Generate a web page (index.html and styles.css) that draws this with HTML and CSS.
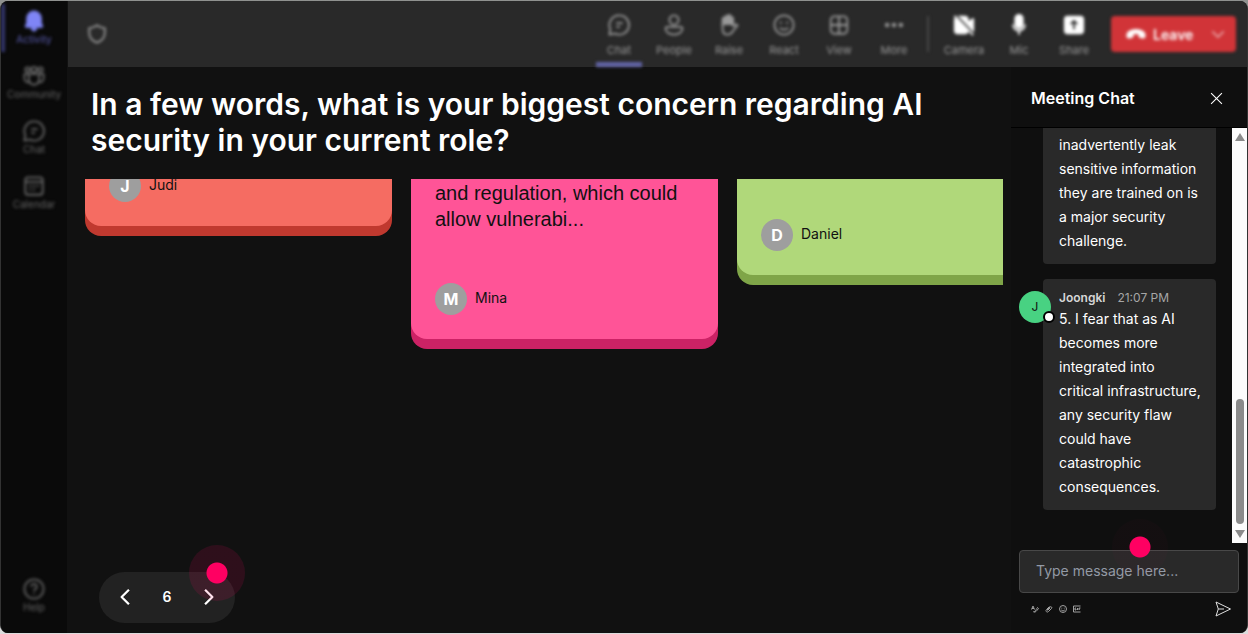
FILE: index.html
```
<!DOCTYPE html>
<html lang="en">
<head>
  <meta charset="utf-8">
  <title>Meeting</title>
  <link rel="stylesheet" href="styles.css">
</head>
<body>
  <!-- shared icons -->
  <svg class="sprite" aria-hidden="true">
    <symbol id="i-chat" viewBox="0 0 24 24">
      <path d="M12.500 1.500a10.500 10.500 0 1 1-4.800 19.900L1.500 22.500l1-6A10.500 10.500 0 0 1 12.500 1.500z"/>
      <path d="M9 10h7M9 14h4"/>
    </symbol>
  </svg>

  <div class="window">
    <nav class="rail">
      <a class="rail-item active" href="#">
        <svg viewBox="0 0 24 24"><path class="solid" d="M12 1a8 8 0 0 0-8 8v5l-1.500 3.500c-.3.800.2 1.500 1 1.500h17c.8 0 1.300-.7 1-1.500L20 14V9a8 8 0 0 0-8-8zM9 20h6a3 3 0 0 1-6 0z"/></svg>
        <span>Activity</span>
      </a>
      <a class="rail-item" href="#">
        <svg viewBox="0 0 24 24"><circle cx="5" cy="5" r="2.500"/><circle cx="12" cy="5" r="3"/><circle cx="19" cy="5" r="2.500"/><path d="M6.500 10h11v6a5.500 5.500 0 0 1-11 0zM6.500 10H1.500v4.500a4.500 4.500 0 0 0 5.500 4.400M17.500 10h5v4.500a4.500 4.500 0 0 1-5.500 4.400"/></svg>
        <span>Community</span>
      </a>
      <a class="rail-item" href="#">
        <svg><use href="#i-chat"/></svg>
        <span>Chat</span>
      </a>
      <a class="rail-item" href="#">
        <svg viewBox="0 0 24 24"><rect x="2.500" y="2.500" width="19" height="19" rx="3"/><path d="M2.500 7.500h19M7 12h2M11 12h2M15 12h2M7 16h2M11 16h2"/></svg>
        <span>Calendar</span>
      </a>
      <a class="rail-item help" href="#">
        <svg viewBox="0 0 24 24"><circle cx="12" cy="12" r="10.500"/><path d="M9 9.500a3 3 0 1 1 4.500 2.600c-1 .6-1.500 1-1.500 2.400M12 16.500v1.500"/></svg>
        <span>Help</span>
      </a>
    </nav>

    <div class="meeting">
      <header class="toolbar">
        <svg class="shield" viewBox="0 0 24 24"><path d="M12 2.500c2.500 2 5 3 8.500 3V11c0 5-3 8.500-8.500 10.500C6.500 19.500 3.500 16 3.500 11V5.500c3.500 0 6-1 8.500-3z"/></svg>

        <div class="tools">
          <button class="tool selected">
            <svg><use href="#i-chat"/></svg>
            <span>Chat</span>
          </button>
          <button class="tool">
            <svg viewBox="0 0 24 24"><circle cx="12" cy="6.500" r="5"/><path d="M4.500 14h15c1.200 0 1.700.8 1.700 1.800C21.200 20 17 22.500 12 22.500S2.800 20 2.800 15.800c0-1 .5-1.800 1.700-1.800z"/></svg>
            <span>People</span>
          </button>
          <button class="tool">
            <svg viewBox="0 0 24 24"><path class="solid" d="M5 12V5.500a1.400 1.400 0 0 1 2.800 0V3.500a1.500 1.500 0 0 1 3 0V2.500a1.500 1.500 0 0 1 3 0v2a1.400 1.400 0 0 1 2.700 0V11H5z"/><path d="M5 11v5c0 4 2 6.500 5.500 6.500 3 0 4.500-1.500 5.500-3.500l5.300-6.500c-1.500-1.800-3.300-1-4.800.8V5"/></svg>
            <span>Raise</span>
          </button>
          <button class="tool">
            <svg viewBox="0 0 24 24"><circle cx="12" cy="12" r="10.500"/><path d="M8.500 8.500v2M15.500 8.500v2M7.500 15a6 6 0 0 0 9 0"/></svg>
            <span>React</span>
          </button>
          <button class="tool">
            <svg viewBox="0 0 24 24"><rect x="3" y="2.500" width="18" height="19" rx="4"/><path d="M12 2.500v19M3 12h18"/></svg>
            <span>View</span>
          </button>
          <button class="tool">
            <svg viewBox="0 0 24 24"><circle class="solid" cx="4.500" cy="12" r="1.500"/><circle class="solid" cx="12" cy="12" r="1.500"/><circle class="solid" cx="19.500" cy="12" r="1.500"/></svg>
            <span>More</span>
          </button>
        </div>

        <div class="tools devices">
          <button class="tool">
            <svg viewBox="0 0 24 24"><path class="solid" d="M5 3h8a3 3 0 0 1 3 3v12a3 3 0 0 1-3 3H5a3 3 0 0 1-3-3V6zM17 9l5-3.500v13L17 15z"/><path class="cut" d="M4 2l20 21"/><path d="M1.500 2l20.500 21"/></svg>
            <span>Camera</span>
          </button>
          <button class="tool">
            <svg viewBox="0 0 24 24"><rect class="solid" x="8" y="1" width="8" height="14" rx="4"/><path d="M5.500 11.500a6.500 6.500 0 0 0 13 0M12 18v4.500"/></svg>
            <span>Mic</span>
          </button>
          <button class="tool">
            <svg viewBox="0 0 24 24"><rect class="solid" x="2" y="3" width="20" height="18" rx="3"/><path class="cut" d="M12 16.500V8M8.500 11 12 7.500 15.500 11"/></svg>
            <span>Share</span>
          </button>
        </div>

        <div class="leave">
          <button class="leave-main">
            <svg viewBox="0 0 24 24"><path class="solid" d="M1.500 14.500C1 9.500 6 7 12 7s11 2.500 10.500 7.500c-.1 1.500-1 2.200-2.500 1.900l-2.500-.5c-1.200-.2-1.700-1-1.700-2v-2.200c-2.500-.8-5-.8-7.600 0v2.200c0 1-.5 1.800-1.700 2l-2.500.5c-1.500.3-2.400-.4-2.500-1.900z"/></svg>
            <span>Leave</span>
          </button>
          <button class="leave-more" aria-label="Leave options">
            <svg viewBox="0 0 16 16"><path d="M1.500 5 8 11.500 14.500 5"/></svg>
          </button>
        </div>
      </header>

      <div class="content">
        <main class="board">
          <h1>In a few words, what is your biggest concern regarding AI security in your current role?</h1>

          <div class="cards">
            <article class="card coral">
              <div class="author"><span class="initial">J</span>Judi</div>
            </article>
            <article class="card pink">
              <p>and regulation, which could allow vulnerabi...</p>
              <div class="author"><span class="initial">M</span>Mina</div>
            </article>
            <article class="card green">
              <div class="author"><span class="initial">D</span>Daniel</div>
            </article>
          </div>

          <div class="pager">
            <button aria-label="Previous"><svg viewBox="0 0 16 16"><path d="M11.500 1.500 5 8l6.500 6.500"/></svg></button>
            <span>6</span>
            <button aria-label="Next"><svg viewBox="0 0 16 16"><path d="M4.500 1.500 11 8l-6.500 6.500"/></svg></button>
            <i class="hotspot"></i>
          </div>
        </main>

        <aside class="chat">
          <div class="chat-head">
            <h2>Meeting Chat</h2>
            <button aria-label="Close chat"><svg viewBox="0 0 12 12"><path d="M1 1l10 10M11 1 1 11"/></svg></button>
          </div>

          <div class="chat-body">
            <div class="messages">
              <div class="message">
                <p>inadvertently leak sensitive information they are trained on is a major security challenge.</p>
              </div>
              <div class="message">
                <span class="avatar">J</span>
                <div class="meta"><b>Joongki</b><time>21:07 PM</time></div>
                <p>5. I fear that as AI becomes more integrated into<br>critical infrastructure, any security flaw could have catastrophic consequences.</p>
              </div>
            </div>
            <div class="scrollbar">
              <svg viewBox="0 0 10 8"><path d="M5 0l5 8H0z"/></svg>
              <div class="thumb"></div>
              <svg viewBox="0 0 10 8"><path d="M5 8l5-8H0z"/></svg>
            </div>
          </div>

          <form class="composer">
            <input type="text" placeholder="Type message here..." aria-label="Message">
            <i class="hotspot faint"></i>
            <div class="actions">
              <button type="button" aria-label="Format"><svg viewBox="0 0 16 16"><path d="M1 9l3-7 3 7M2 7h4M4 13c3 2 5-2 9-8l2 2c-4 5-6 8-9 7"/></svg></button>
              <button type="button" aria-label="Attach"><svg viewBox="0 0 16 16"><path d="M4 10l6-6c2-2 5 1 3 3l-6 6c-3 3-7-1-4-4l6-6M5 11l5-5"/></svg></button>
              <button type="button" aria-label="Emoji"><svg viewBox="0 0 16 16"><circle cx="8" cy="8" r="7"/><path d="M5.500 5.500v1.500M10.500 5.500v1.500M4.500 10a4.500 4.500 0 0 0 7 0"/></svg></button>
              <button type="button" aria-label="GIF"><svg viewBox="0 0 16 16"><path d="M15 2H1v12h14M6 6H4v4h2V8M9 6v4M12 10V6h3M12 8h2"/></svg></button>
              <button class="send" type="submit" aria-label="Send"><svg viewBox="0 0 16 16"><path d="M1 1l14.500 7L1 15l2.300-7zM3.300 8H9"/></svg></button>
            </div>
          </form>
        </aside>
      </div>
    </div>
  </div>
</body>
</html>
```
FILE: styles.css
```
* {
    box-sizing: border-box;
}
body {
    margin: 0;
    padding: 1px 0;
    height: 100vh;
    background: linear-gradient(#8f918f, #dcdcdc);
    color: #fff;
    font-family: Inter, "Liberation Sans", sans-serif;
}
h1, h2, p {
    margin: 0;
}
button {
    padding: 0;
    border: 0;
    background: none;
    color: inherit;
    font: inherit;
}
svg {
    display: block;
    fill: none;
    stroke: currentColor;
    stroke-width: 2;
    stroke-linejoin: round;
}
.sprite {
    position: absolute;
    width: 0;
    height: 0;
}
.solid {
    fill: currentColor;
}
.cut {
    stroke: #292929;
}
.window {
    display: flex;
    height: 100%;
    border: solid #333;
    border-width: 0 1px;
    border-radius: 8px;
    overflow: hidden;
    background: #111;
}

/* left rail */
.rail {
    display: flex;
    flex-direction: column;
    gap: 9px;
    width: 66px;
    padding: 3px 0 15px;
    background: #0a0a0a;
    color: #666;
}
.rail-item {
    position: relative;
    display: flex;
    flex-direction: column;
    align-items: center;
    height: 46px;
    padding-top: 6px;
    color: inherit;
    text-decoration: none;
    font-size: 10px;
    line-height: 14px;
    filter: blur(1px) blur(1px);
}
.rail-item svg, .tool svg {
    width: 22px;
    height: 22px;
}
.rail-item.active {
    color: #5a5cb0;
}
.rail-item.active svg {
    color: #7f85f5;
    stroke-width: 1;
}
.rail-item.active::before {
    content: "";
    position: absolute;
    left: 0;
    top: 0;
    width: 4px;
    height: 48px;
    background: #33356b;
}
.help {
    margin-top: auto;
}

/* top toolbar */
.meeting {
    flex: 1;
    min-width: 0;
    display: flex;
    flex-direction: column;
}
.toolbar {
    display: flex;
    align-items: center;
    height: 66px;
    padding: 0 11px 0 18px;
    margin-left: 1px;
    background: #292929;
    color: #999;
}
.toolbar > * {
    filter: blur(1px) blur(1px);
}
.shield {
    width: 22px;
    height: 22px;
    margin-right: auto;
}
.tools {
    display: flex;
    gap: 9px;
    height: 66px;
}
.tool {
    width: 46px;
    display: flex;
    flex-direction: column;
    align-items: center;
    gap: 7px;
    padding-top: 13px;
    border-bottom: 5px solid transparent;
    font-size: 11px;
    line-height: 14px;
}
.tool.selected {
    border-color: #6264a7;
}
.devices {
    margin-left: 24px;
    position: relative;
}
.devices::before {
    content: "";
    position: absolute;
    left: -14px;
    top: 15px;
    width: 2px;
    height: 36px;
    background: #484848;
}
.devices svg {
    color: #fff;
}
.leave {
    display: flex;
    width: 125px;
    height: 36px;
    margin-left: 14px;
    border-radius: 4px;
    background: #d13438;
    color: #fff;
}
.leave-main {
    flex: 1;
    display: flex;
    align-items: center;
    gap: 7px;
    padding-left: 15px;
    font-size: 14px;
    font-weight: 600;
}
.leave-main svg {
    width: 20px;
    height: 20px;
}
.leave-more {
    width: 35px;
    color: #e8a0a2;
}
.leave-more svg {
    width: 14px;
    height: 14px;
    margin-left: 10px;
}

.content {
    flex: 1;
    min-height: 0;
    display: flex;
}

/* answer board */
.board {
    flex: 1;
    min-width: 0;
    display: flex;
    flex-direction: column;
    padding: 19px 8px 10px 18px;
}
h1 {
    padding: 0 48px 0 6px;
    font-size: 30px;
    line-height: 36px;
    font-weight: 600;
}
.cards {
    flex: 1;
    min-height: 0;
    display: flex;
    align-items: flex-start;
    gap: 19px;
    margin-top: 21px;
    overflow: hidden;
}
.card {
    flex: 0 0 307px;
    display: flex;
    flex-direction: column;
    justify-content: flex-end;
    padding: 0 24px 24px;
    border-radius: 0 0 16px 16px;
    color: #111;
}
.card p {
    margin-bottom: 51px;
    font-family: "Liberation Sans", Arial, sans-serif;
    font-size: 20px;
    line-height: 26px;
}
.coral {
    height: 47px;
    background: #f56c62;
    box-shadow: 0 10px #c0392f;
}
.pink {
    height: 160px;
    background: #ff5497;
    box-shadow: 0 10px #cc2265;
}
.green {
    height: 96px;
    background: #b0d87a;
    box-shadow: 0 10px #7fa548;
}
.author {
    display: flex;
    gap: 8px;
    font-size: 14px;
    line-height: 30px;
}
.initial {
    width: 32px;
    border-radius: 50%;
    background: #9e9e9e;
    color: #fff;
    font-size: 16px;
    line-height: 32px;
    font-weight: 700;
    text-align: center;
}
.pager {
    position: relative;
    display: flex;
    align-items: center;
    justify-content: space-between;
    width: 136px;
    height: 51px;
    margin-left: 14px;
    padding: 0 17px 2px;
    border-radius: 26px;
    background: #222;
    font-size: 14px;
    font-weight: 600;
}
.pager svg {
    width: 18px;
    height: 18px;
}
.hotspot {
    position: absolute;
    right: -10px;
    top: -27px;
    width: 56px;
    height: 56px;
    border-radius: 50%;
    background: radial-gradient(circle, #ff0062 10px, rgba(255, 0, 98, 0.12) 11px);
}
.hotspot.faint {
    right: 79px;
    top: -24px;
    background: radial-gradient(circle, #ff0062 10px, rgba(255, 0, 98, 0.02) 11px);
}

/* chat panel */
.chat {
    width: 236px;
    display: flex;
    flex-direction: column;
    background: #0f0f0f;
}
.chat-head {
    display: flex;
    align-items: center;
    justify-content: space-between;
    height: 61px;
    padding: 2px 24px 0 20px;
    border-bottom: 1px solid #000;
}
h2 {
    font-size: 16px;
    font-weight: 600;
}
.chat-head svg {
    width: 13px;
    height: 13px;
    stroke-width: 1;
}
.chat-body {
    flex: 1;
    min-height: 0;
    display: flex;
}
.messages {
    flex: 1;
    display: flex;
    flex-direction: column;
    justify-content: flex-end;
    gap: 15px;
    padding: 0 16px 33px 32px;
    overflow: hidden;
}
.message {
    position: relative;
    padding: 10px 12px 11px 16px;
    border-radius: 4px;
    background: #292929;
    font-size: 14px;
    line-height: 24px;
}
.meta {
    display: flex;
    gap: 12px;
    font-size: 12px;
    line-height: 18px;
    color: #a6a6a6;
}
.meta b {
    color: #d6d6d6;
    font-weight: 600;
}
.avatar {
    position: absolute;
    left: -24px;
    top: 12px;
    width: 32px;
    border-radius: 50%;
    background: #48d282;
    color: #111;
    font-size: 12px;
    line-height: 32px;
    text-align: center;
}
.avatar::after {
    content: "";
    position: absolute;
    right: -4px;
    bottom: 0;
    width: 8px;
    height: 8px;
    border: 2px solid #000;
    border-radius: 50%;
    background: #fff;
}
.scrollbar {
    width: 15px;
    display: flex;
    flex-direction: column;
    align-items: center;
    padding: 5px 0;
    background: #fcfcfc;
}
.scrollbar svg {
    width: 10px;
    height: 8px;
    fill: #8b8b8b;
    stroke: none;
}
.thumb {
    width: 8px;
    height: 125px;
    margin: auto 0 6px;
    border-radius: 4px;
    background: #8b8b8b;
}
.composer {
    position: relative;
    padding: 7px 8px 16px;
}
.composer input {
    display: block;
    width: 100%;
    height: 43px;
    padding: 0 16px 3px;
    border: 1px solid #484848;
    border-radius: 4px;
    background: #292929;
    color: #fff;
    font: 14px Inter, sans-serif;
}
.composer input::placeholder {
    color: #939aa5;
}
.actions {
    display: flex;
    align-items: center;
    gap: 6px;
    padding: 8px 8px 0 12px;
    color: #a0a0a0;
}
.actions svg {
    width: 8px;
    height: 8px;
}
.actions .send {
    margin-left: auto;
    color: #e0e0e0;
}
.send svg {
    width: 16px;
    height: 16px;
    stroke-width: 1;
}
```
